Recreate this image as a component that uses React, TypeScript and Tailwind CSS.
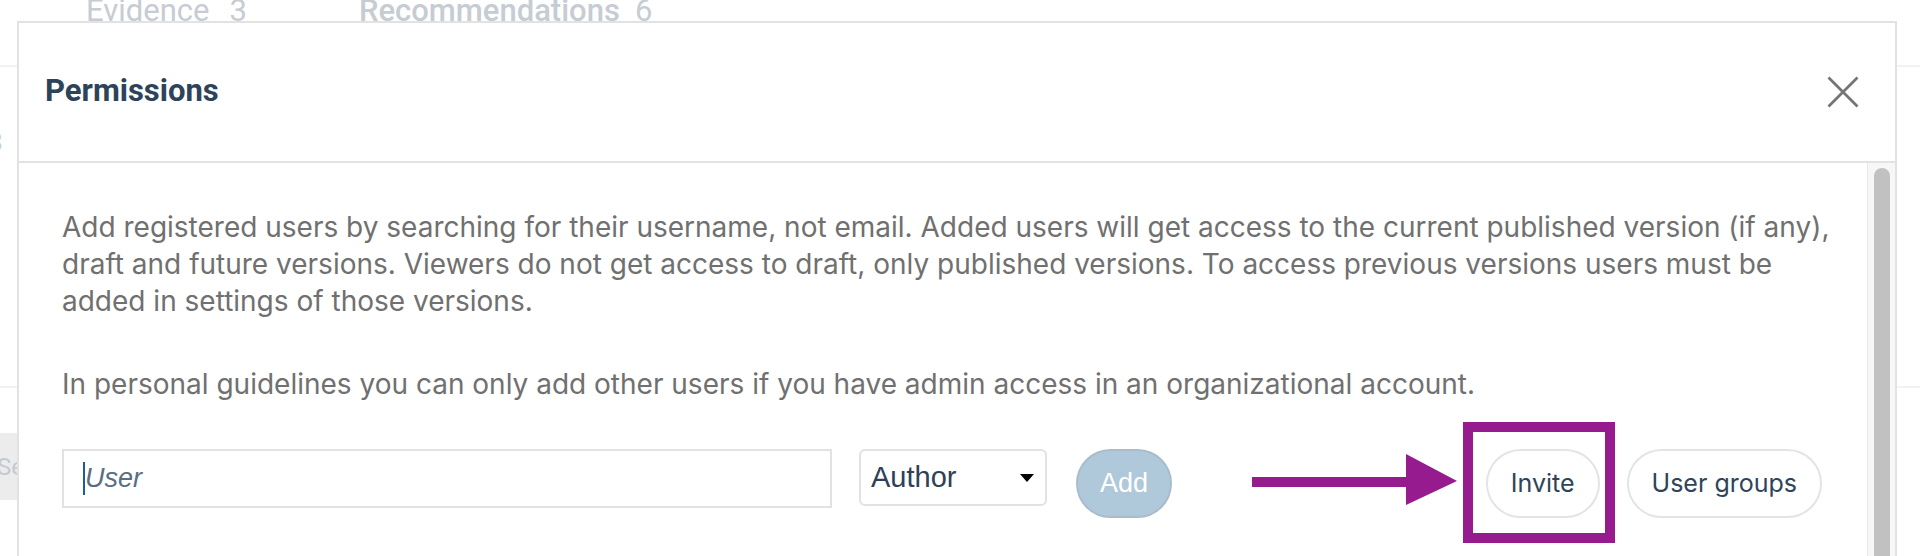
import React from "react";

const inter = { fontFamily: "Inter, 'Noto Sans', sans-serif" };

function CloseIcon() {
  return (
    <svg width="32" height="32" viewBox="0 0 32 32" fill="none">
      <path d="M1.5 1.5 L30.5 30.5 M30.5 1.5 L1.5 30.5" stroke="#757575" strokeWidth="2.8" />
    </svg>
  );
}

function Background() {
  return (
    <div className="flex flex-col font-['Roboto',sans-serif] text-[#c6ccd3]">
      <div className="flex h-[67px] items-start border-b-2 border-[#f2f2f2] pl-[86px]">
        <div className="-mt-[5px] flex items-baseline text-[31px] leading-[31px]">
          <span>Evidence</span>
          <span className="ml-[20px]">3</span>
          <span className="ml-[112px] font-medium">Recommendations</span>
          <span className="ml-[15px]">6</span>
        </div>
      </div>
      <div className="flex h-[321px] items-start border-b-2 border-[#f2f2f2]">
        <span className="-ml-[12px] mt-[62px] text-[26px] leading-[26px]">8</span>
      </div>
      <div className="mt-[45px] flex h-[67px] w-[17px] items-center overflow-hidden bg-[#ececec]">
        <span className="-ml-[3px] text-[24px] text-[#c3cad2]">Se</span>
      </div>
    </div>
  );
}

export default function App() {
  return (
    <div className="relative h-[556px] w-[1920px] overflow-hidden bg-white">
      <Background />

      <div className="absolute left-[17px] top-[21px] flex h-[620px] w-[1880px] flex-col border-2 border-[#e2e2e2] bg-white">
        <div className="flex h-[140px] shrink-0 items-center justify-between border-b-2 border-[#e2e2e2] pl-[26px] pr-[36px]">
          <h2 className="-mt-[3px] font-['Roboto',sans-serif] text-[31px] font-bold leading-none text-[#2d4359]">
            Permissions
          </h2>
          <CloseIcon />
        </div>

        <div className="flex flex-1">
          <div className="flex-1 pl-[43px] pr-[45px] pt-[46px]" style={inter}>
            <p className="mr-[-30px] text-[28px] leading-[37px] text-[#707070]">
              Add registered users by searching for their username, not email. Added users will get access to the current
              published version (if any), draft and future versions. Viewers do not get access to draft, only published
              versions. To access previous versions users must be added in settings of those versions.
            </p>
            <p className="mt-[46px] text-[28px] leading-[37px] text-[#707070]">
              In personal guidelines you can only add other users if you have admin access in an organizational account.
            </p>

            <div className="relative mt-[46px] flex items-start">
              <div className="flex h-[59px] w-[770px] items-center border-2 border-[#e2e2e2] pl-[19px]">
                <span className="h-[33px] w-[2px] bg-[#1c5d99]" />
                <span className="font-['Liberation_Sans',sans-serif] text-[27px] italic text-[#5a6e83]">User</span>
              </div>

              <div className="ml-[27px] flex h-[57px] w-[188px] items-center justify-between rounded-[6px] border-2 border-[#e2e2e2] pl-[10px] pr-[11px]">
                <span className="font-['Liberation_Sans',sans-serif] text-[29px] text-[#2d4157]">Author</span>
                <svg width="14" height="8" viewBox="0 0 14 8">
                  <path d="M0 0 H14 L7 8 Z" fill="#000" />
                </svg>
              </div>

              <button className="ml-[29px] flex h-[69px] w-[96px] items-center justify-center rounded-full border-2 border-[#a9bccc] bg-[#afc8da] font-['Liberation_Sans',sans-serif] text-[27px] text-white">
                Add
              </button>

              <div className="ml-auto flex gap-[27px]" style={inter}>
                <button className="h-[69px] rounded-full border-2 border-[#e4e4e4] bg-white px-[23px] text-[25px] text-[#2f4459]">
                  Invite
                </button>
                <button className="h-[69px] rounded-full border-2 border-[#e4e4e4] bg-white px-[23px] text-[25px] text-[#2f4459]">
                  User groups
                </button>
              </div>

              {/* annotation: arrow and highlight box */}
              <svg className="absolute left-[1190px] top-[5px]" width="206" height="52" viewBox="0 0 206 52">
                <rect x="0" y="23" width="156" height="10" fill="#951b8e" />
                <path d="M154 0 L205 27 L154 51 Z" fill="#951b8e" />
              </svg>
              <div className="absolute left-[1401px] top-[-27px] h-[121px] w-[152px] border-[10px] border-[#951b8e]" />
            </div>
          </div>

          <div className="w-[28px] shrink-0 border-l border-[#e8e8e8] bg-[#f7f7f7] pl-[6px] pt-[5px]">
            <div className="h-[500px] w-[16px] rounded-full bg-[#c1c1c1]" />
          </div>
        </div>
      </div>
    </div>
  );
}
